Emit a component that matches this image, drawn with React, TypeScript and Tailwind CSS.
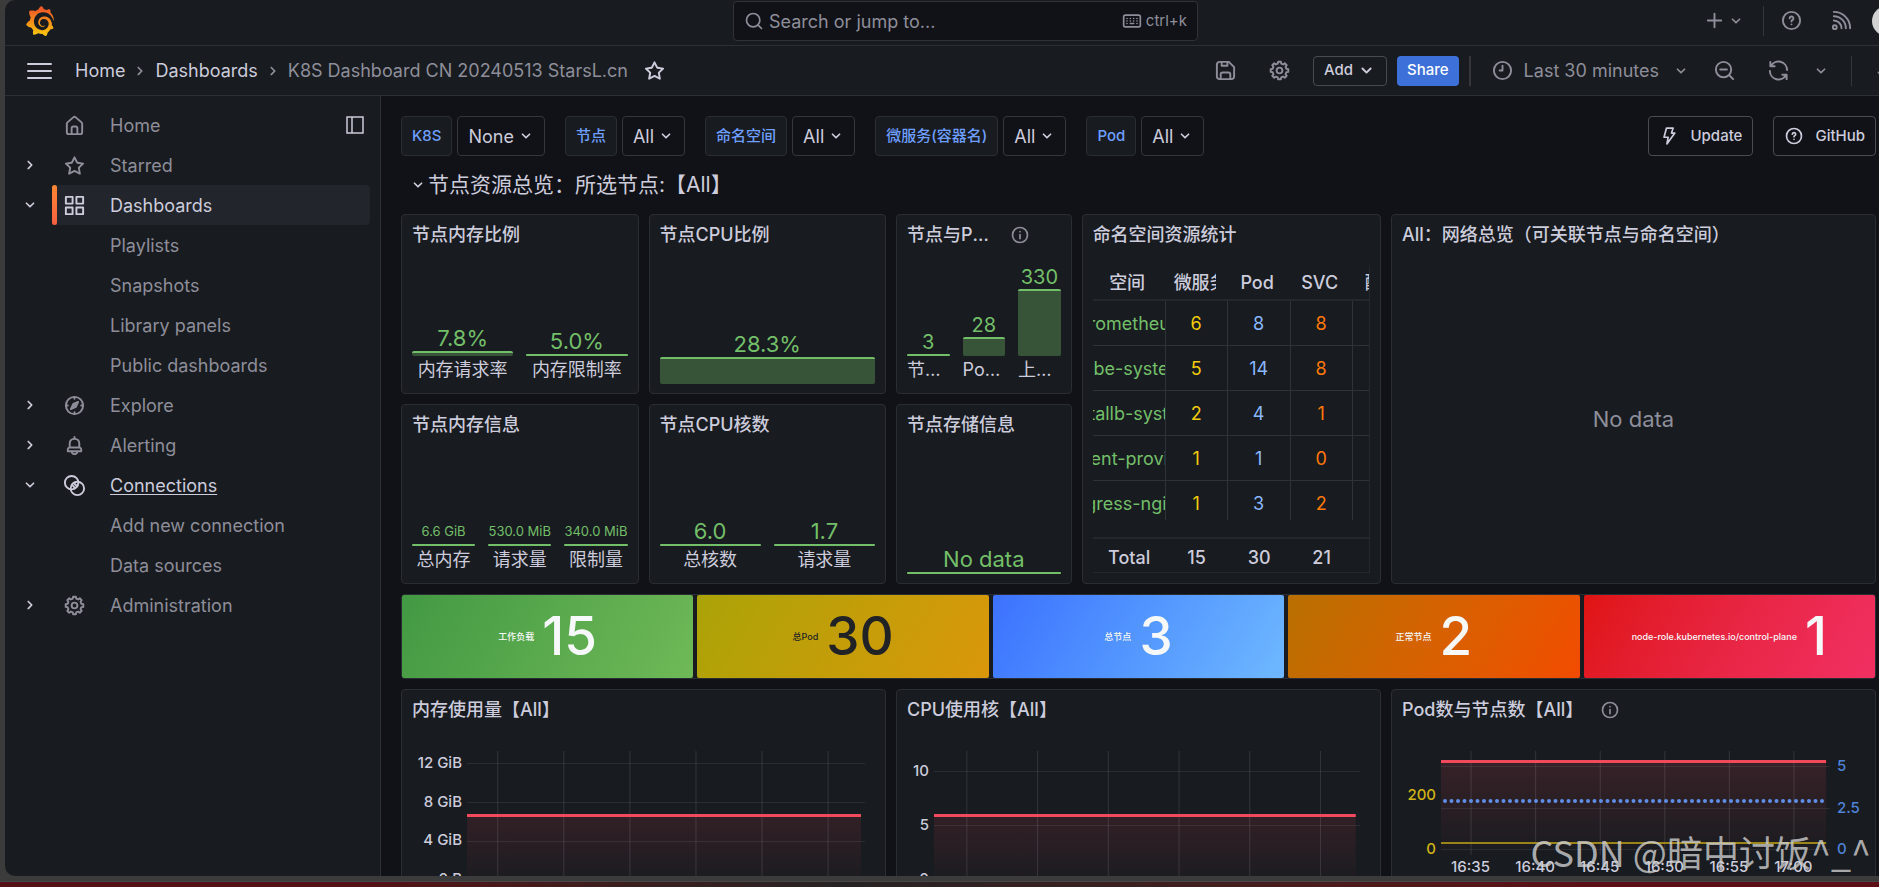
import type { ReactNode } from 'react';
import { SiGrafana } from 'react-icons/si';

// --- Icons ---
interface IconProps {
    className?: string;
}

function Glyph({ className = 'size-[23px]', children }: IconProps & { children: ReactNode }) {
    return (
        <svg viewBox="0 0 24 24" fill="currentColor" className={`shrink-0 ${className}`} aria-hidden="true">
            {children}
        </svg>
    );
}

function Stroke({ className = 'size-[23px]', children }: IconProps & { children: ReactNode }) {
    return (
        <svg
            viewBox="0 0 24 24"
            fill="none"
            stroke="currentColor"
            strokeWidth="2"
            strokeLinecap="round"
            strokeLinejoin="round"
            className={`shrink-0 ${className}`}
            aria-hidden="true"
        >
            {children}
        </svg>
    );
}

const AngleDown = ({ className = 'size-5' }: IconProps) => (
    <Glyph className={className}>
        <path d="M17,9.17a1,1,0,0,0-1.41,0L12,12.71,8.46,9.17a1,1,0,0,0-1.41,0,1,1,0,0,0,0,1.42l4.24,4.24a1,1,0,0,0,1.42,0L17,10.59A1,1,0,0,0,17,9.17Z" />
    </Glyph>
);

const AngleRight = ({ className = 'size-5' }: IconProps) => (
    <Glyph className={className}>
        <path d="M14.83,11.29,10.59,7.05a1,1,0,0,0-1.42,0,1,1,0,0,0,0,1.41L12.71,12,9.17,15.54a1,1,0,0,0,0,1.41,1,1,0,0,0,.71.29,1,1,0,0,0,.71-.29l4.24-4.24A1,1,0,0,0,14.83,11.29Z" />
    </Glyph>
);

const HomeIcon = () => (
    <Glyph>
        <path d="M20,8h0L14,2.74a3,3,0,0,0-4,0L4,8a3,3,0,0,0-1,2.26V19a3,3,0,0,0,3,3H18a3,3,0,0,0,3-3V10.25A3,3,0,0,0,20,8ZM14,20H10V15a1,1,0,0,1,1-1h2a1,1,0,0,1,1,1Zm5-1a1,1,0,0,1-1,1H16V15a3,3,0,0,0-3-3H11a3,3,0,0,0-3,3v5H6a1,1,0,0,1-1-1V10.25a1,1,0,0,1,.34-.75l6-5.25a1,1,0,0,1,1.32,0l6,5.25a1,1,0,0,1,.34.75Z" />
    </Glyph>
);

const StarIcon = () => (
    <Glyph>
        <path d="M22,9.67A1,1,0,0,0,21.14,9l-5.69-.83L12.9,3a1,1,0,0,0-1.8,0L8.55,8.16,2.86,9a1,1,0,0,0-.81.68,1,1,0,0,0,.25,1l4.13,4-1,5.68A1,1,0,0,0,6.9,21.44L12,18.77l5.1,2.67a.93.93,0,0,0,.46.12,1,1,0,0,0,.59-.19,1,1,0,0,0,.4-1l-1-5.68,4.13-4A1,1,0,0,0,22,9.67Zm-6.15,4a1,1,0,0,0-.29.88l.72,4.2-3.76-2a1.06,1.06,0,0,0-.94,0l-3.76,2,.72-4.2a1,1,0,0,0-.29-.88l-3-3,4.21-.61a1,1,0,0,0,.76-.55L12,5.7l1.88,3.82a1,1,0,0,0,.76.55l4.21.61Z" />
    </Glyph>
);

const AppsIcon = () => (
    <Glyph>
        <path d="M10,13H3a1,1,0,0,0-1,1v7a1,1,0,0,0,1,1h7a1,1,0,0,0,1-1V14A1,1,0,0,0,10,13ZM9,20H4V15H9ZM21,2H14a1,1,0,0,0-1,1v7a1,1,0,0,0,1,1h7a1,1,0,0,0,1-1V3A1,1,0,0,0,21,2ZM20,9H15V4h5Zm1,4H14a1,1,0,0,0-1,1v7a1,1,0,0,0,1,1h7a1,1,0,0,0,1-1V14A1,1,0,0,0,21,13Zm-1,7H15V15h5ZM10,2H3A1,1,0,0,0,2,3v7a1,1,0,0,0,1,1h7a1,1,0,0,0,1-1V3A1,1,0,0,0,10,2ZM9,9H4V4H9Z" />
    </Glyph>
);

const BellIcon = () => (
    <Glyph>
        <path d="M18,13.18V10a6,6,0,0,0-5-5.91V3a1,1,0,0,0-2,0V4.09A6,6,0,0,0,6,10v3.18A3,3,0,0,0,4,16v2a1,1,0,0,0,1,1H8.14a4,4,0,0,0,7.72,0H19a1,1,0,0,0,1-1V16A3,3,0,0,0,18,13.18ZM8,10a4,4,0,0,1,8,0v3H8Zm4,10a2,2,0,0,1-1.72-1h3.44A2,2,0,0,1,12,20Zm6-3H6V16a1,1,0,0,1,1-1H17a1,1,0,0,1,1,1Z" />
    </Glyph>
);

const CompassIcon = () => (
    <Stroke>
        <circle cx="12" cy="12" r="9" />
        <path d="M12 3v2M12 19v2M3 12h2M19 12h2" />
        <path d="M15.8 8.2l-5 2.1-2.6 5.5 5.2-2.4z" />
        <path d="M11.2 12.8l1.6-1.6" />
    </Stroke>
);

const ConnectionsIcon = () => (
    <Stroke>
        <circle cx="9" cy="9" r="7" />
        <circle cx="15" cy="15" r="7" />
        <path d="M11.2 9.4l3.4 3.4M9.4 11.4l3.2 3.2" />
    </Stroke>
);

// Eight-toothed gear outline, two points per tooth flank
const gearPoints = Array.from({ length: 32 }, (_, i) => {
    const tooth = Math.floor(i / 4);
    const radius = i % 4 === 1 || i % 4 === 2 ? 9.3 : 7.4;
    const offset = [-14, -9, 9, 14][i % 4];
    const angle = ((tooth * 45 + offset) * Math.PI) / 180;
    return `${(12 + radius * Math.cos(angle)).toFixed(2)},${(12 + radius * Math.sin(angle)).toFixed(2)}`;
}).join(' ');

const CogIcon = () => (
    <Stroke>
        <polygon points={gearPoints} />
        <circle cx="12" cy="12" r="3" />
    </Stroke>
);

const DockIcon = () => (
    <svg viewBox="0 0 20 20" fill="none" stroke="currentColor" strokeWidth="1.5" className="size-5" aria-hidden="true">
        <path d="M2 2h16v16H2zM7 2v16" />
    </svg>
);

const HelpIcon = ({ className }: IconProps) => (
    <Stroke className={className}>
        <circle cx="12" cy="12" r="9" />
        <path d="M10 9.8a2 2 0 1 1 2.8 1.9c-.6.3-.8.7-.8 1.3M12 16h.01" />
    </Stroke>
);

const InfoIcon = () => (
    <Stroke className="size-5">
        <circle cx="12" cy="12" r="9" />
        <path d="M12 11.5v5M12 8h.01" />
    </Stroke>
);

const SearchIcon = () => (
    <Stroke className="size-5">
        <circle cx="11" cy="11" r="8" />
        <path d="M21 21l-4-4" />
    </Stroke>
);

const KeyboardIcon = () => (
    <Stroke className="size-5">
        <rect x="2" y="5" width="20" height="14" rx="2" />
        <path d="M6 9h.01M10 9h.01M14 9h.01M18 9h.01M6 12h.01M10 12h.01M14 12h.01M18 12h.01M6 15h.01M10 15h4M18 15h.01" />
    </Stroke>
);

const PlusIcon = () => (
    <Stroke>
        <path d="M12 5v14M5 12h14" />
    </Stroke>
);

const RssIcon = () => (
    <Stroke>
        <circle cx="5" cy="19" r="2" />
        <path d="M4 12a8 8 0 0 1 8 8M4 7.500a12.500 12.500 0 0 1 12.500 12.500M4 3a17 17 0 0 1 17 17" />
    </Stroke>
);

const SaveIcon = () => (
    <Stroke>
        <path d="M3 6a3 3 0 0 1 3-3h9.500L21 8.500V18a3 3 0 0 1-3 3H6a3 3 0 0 1-3-3z" />
        <path d="M8 3v4h6V3M7 21v-5a2 2 0 0 1 2-2h6a2 2 0 0 1 2 2v5" />
    </Stroke>
);

const ClockIcon = () => (
    <Stroke>
        <circle cx="12" cy="12" r="9" />
        <path d="M12 7v5H9" />
    </Stroke>
);

const ZoomOutIcon = () => (
    <Stroke>
        <circle cx="11" cy="11" r="8" />
        <path d="M21 21l-4-4M7.500 11h7" />
    </Stroke>
);

const SyncIcon = () => (
    <Stroke>
        <path d="M3.500 3v4.500H8M4 7.500A9 9 0 0 1 21 11.500M20.500 21v-4.500H16M20 16.500A9 9 0 0 1 3 12.500" />
    </Stroke>
);

const BoltIcon = () => (
    <Stroke className="size-5">
        <path d="M9 2.500h8l-2 6h4L9.500 21.500l1.500-8H6z" />
    </Stroke>
);

// --- Header ---
function TopBar() {
    return (
        <div className="-mr-[47px] grid h-[46px] shrink-0 grid-cols-[1fr_465px_1fr] border-b border-[#2c2f35] pr-6">
            <div className="flex items-center pb-1 pl-5">
                <svg className="absolute size-0" aria-hidden="true">
                    <linearGradient id="grafana" x1="0" y1="0" x2="0" y2="1">
                        <stop offset="0.1" stopColor="#f05a28" />
                        <stop offset="1" stopColor="#fbca0a" />
                    </linearGradient>
                </svg>
                <a href="#home" aria-label="Grafana">
                    <SiGrafana className="size-[30px] fill-[url(#grafana)]" />
                </a>
            </div>
            <div className="-mr-3 ml-3 mt-px flex h-10 w-[465px] items-center rounded-sm border border-[#303238] bg-[#111217] px-2.5">
                <SearchIcon />
                <input
                    type="text"
                    aria-label="Search"
                    placeholder="Search or jump to..."
                    className="ml-[5px] min-w-0 flex-1 bg-transparent text-[18px] placeholder:text-[#8e8e9a]"
                />
                <KeyboardIcon />
                <span className="ml-1 text-[15px]">ctrl+k</span>
            </div>
            <div className="flex items-center justify-end pb-1">
                <button type="button" aria-label="New" className="mr-[17px] flex items-center">
                    <PlusIcon />
                    <AngleDown />
                </button>
                <div className="h-[30px] w-px bg-[#34363c]" />
                <button type="button" aria-label="Help" className="flex w-[50px] justify-center pl-1">
                    <HelpIcon />
                </button>
                <button type="button" aria-label="News" className="flex w-[50px] justify-center pl-1">
                    <RssIcon />
                </button>
                <button type="button" aria-label="Profile" className="ml-2 size-[30px] rounded-full bg-[#d2d2d2]" />
            </div>
        </div>
    );
}

function Toolbar() {
    return (
        <div className="-mr-[47px] flex h-[50px] shrink-0 items-center border-b border-[#2c2f35] pl-[22px] pr-[34px]">
            <button type="button" aria-label="Toggle menu" className="flex w-[25px] flex-col gap-[5px] text-[#ccccdc]">
                <span className="h-0.5 w-full rounded bg-current" />
                <span className="h-0.5 w-full rounded bg-current" />
                <span className="h-0.5 w-full rounded bg-current" />
            </button>
            <nav aria-label="Breadcrumbs" className="ml-[23px] flex items-center gap-[5px] text-[18px]">
                <a href="#home" className="text-[#ccccdc]">Home</a>
                <AngleRight />
                <a href="#dashboards" className="text-[#ccccdc]">Dashboards</a>
                <AngleRight />
                <span>K8S Dashboard CN 20240513 StarsL.cn</span>
            </nav>
            <button type="button" aria-label="Mark as favorite" className="ml-[15px] text-[#ccccdc]">
                <StarIcon />
            </button>
            <div className="ml-auto flex items-center">
                <button type="button" aria-label="Save dashboard" className="mr-[31px]"><SaveIcon /></button>
                <button type="button" aria-label="Dashboard settings" className="mr-[22px]"><CogIcon /></button>
                <button type="button" className="mr-2.5 flex h-[30px] items-center rounded-sm border border-[#494b53] pl-2.5 pr-2 text-[15px] font-medium text-[#ccccdc]">
                    Add
                    <AngleDown className="ml-0.5 size-[23px]" />
                </button>
                <button type="button" className="mr-2.5 h-[30px] rounded-sm bg-[#3d71d9] px-2.5 text-[15px] font-medium text-white">
                    Share
                </button>
                <div className="mr-5 h-[30px] w-0.5 bg-[#34363c]" />
                <button type="button" className="mr-[22px] flex items-center text-[18px]">
                    <ClockIcon />
                    <span className="ml-2.5 mr-3">Last 30 minutes</span>
                    <AngleDown />
                </button>
                <button type="button" aria-label="Zoom out" className="mr-[31px]"><ZoomOutIcon /></button>
                <button type="button" aria-label="Refresh" className="mr-[21px]"><SyncIcon /></button>
                <button type="button" aria-label="Auto refresh interval" className="mr-5"><AngleDown /></button>
                <div className="mr-5 h-[30px] w-px bg-[#34363c]" />
                <button type="button" aria-label="Hide toolbar" className="rotate-180"><AngleDown /></button>
            </div>
        </div>
    );
}

// --- Sidebar ---
interface NavItem {
    label: string;
    icon?: ReactNode;
    toggle?: 'open' | 'closed';
    active?: boolean;
    hovered?: boolean;
    dock?: boolean;
}

const NAV_ITEMS: NavItem[] = [
    { label: 'Home', icon: <HomeIcon />, dock: true },
    { label: 'Starred', icon: <StarIcon />, toggle: 'closed' },
    { label: 'Dashboards', icon: <AppsIcon />, toggle: 'open', active: true },
    { label: 'Playlists' },
    { label: 'Snapshots' },
    { label: 'Library panels' },
    { label: 'Public dashboards' },
    { label: 'Explore', icon: <CompassIcon />, toggle: 'closed' },
    { label: 'Alerting', icon: <BellIcon />, toggle: 'closed' },
    { label: 'Connections', icon: <ConnectionsIcon />, toggle: 'open', hovered: true },
    { label: 'Add new connection' },
    { label: 'Data sources' },
    { label: 'Administration', icon: <CogIcon />, toggle: 'closed' },
];

function Sidebar() {
    return (
        <nav aria-label="Main" className="w-[376px] shrink-0 border-r border-[#2c2f35] pr-2.5 pt-[9px]">
            <ul>
                {NAV_ITEMS.map(item => (
                    <li key={item.label} className="flex h-10 items-center">
                        <div className="flex w-[47px] pl-[15px] text-[#ccccdc]">
                            {item.toggle && (
                                <button type="button" aria-label={`Toggle ${item.label}`}>
                                    {item.toggle === 'open' ? <AngleDown /> : <AngleRight />}
                                </button>
                            )}
                        </div>
                        <div className={`flex h-full flex-1 items-center rounded-sm ${item.active ? 'bg-[#22252b]' : ''}`}>
                            <span className={`h-full w-[5px] rounded-sm ${item.active ? 'bg-linear-to-b from-[#ff8833] to-[#f55f3e]' : ''}`} />
                            <a
                                href={`#${item.label.toLowerCase().replaceAll(' ', '-')}`}
                                className={`flex flex-1 items-center text-[18px] ${item.active || item.hovered ? 'text-[#ccccdc]' : ''}`}
                            >
                                <span className="flex w-[53px] pl-1.5">{item.icon}</span>
                                <span className={item.hovered ? 'underline underline-offset-2' : ''}>{item.label}</span>
                            </a>
                            {item.dock && (
                                <button type="button" aria-label="Undock menu" className="mr-[5px] text-[#ccccdc]">
                                    <DockIcon />
                                </button>
                            )}
                        </div>
                    </li>
                ))}
            </ul>
        </nav>
    );
}

// --- Dashboard controls ---
const VARIABLES = [
    { name: 'K8S', value: 'None' },
    { name: '节点', value: 'All' },
    { name: '命名空间', value: 'All' },
    { name: '微服务(容器名)', value: 'All' },
    { name: 'Pod', value: 'All' },
];

function Controls() {
    return (
        <div className="flex gap-5">
            {VARIABLES.map(v => (
                <div key={v.name} className="flex gap-[5px]">
                    <span className="flex h-10 items-center rounded-sm border border-[#2a2d32] bg-[#181b1f] px-2.5 text-[15px] font-medium text-[#6e9fff]">
                        {v.name}
                    </span>
                    <button type="button" aria-label={v.name} className="flex h-10 items-center rounded-sm border border-[#34363c] pl-2.5 pr-2 text-[18px] text-[#ccccdc]">
                        {v.value}
                        <AngleDown className="ml-0.5 size-5" />
                    </button>
                </div>
            ))}
            <div className="ml-auto flex gap-5 text-[15px] font-medium text-[#ccccdc]">
                <a href="#update" className="flex h-10 items-center gap-[11px] rounded-sm border border-[#494b53] px-2.5">
                    <BoltIcon />
                    Update
                </a>
                <a href="#github" className="flex h-10 items-center gap-[11px] rounded-sm border border-[#494b53] px-2.5">
                    <HelpIcon className="size-5" />
                    GitHub
                </a>
            </div>
        </div>
    );
}

// --- Panels ---
interface PanelProps {
    title: string;
    info?: boolean;
    className: string;
    children: ReactNode;
}

function Panel({ title, info, className, children }: PanelProps) {
    return (
        <section className={`flex min-w-0 flex-col rounded-sm border border-[#2a2d32] bg-[#181b1f] ${className}`}>
            <header className="flex h-10 shrink-0 items-center px-2.5">
                <h2 className={`truncate text-[18px] leading-6 font-medium ${info ? 'max-w-[calc(100%-68px)]' : ''}`}>{title}</h2>
                {info && <span className="ml-[17px] text-[#8e8e9a]"><InfoIcon /></span>}
            </header>
            {children}
        </section>
    );
}

interface Bar {
    value: string;
    label?: string;
    // Bar height in px, top edge included
    height: number;
}

function BarGauge({ bars, size = 'text-[22px]', align = 'text-center' }: { bars: Bar[]; size?: string; align?: string }) {
    return (
        <div className="flex flex-1 items-end gap-[13px] px-2.5 pb-[9px]">
            {bars.map(bar => (
                <div key={bar.value} className="min-w-0 flex-1">
                    <div className={`flex h-[22px] items-end justify-center leading-none whitespace-nowrap text-[#73bf69] ${size}`}>{bar.value}</div>
                    <div
                        className="mt-0.5 rounded-xs border-t-2 border-[#73bf69] bg-[#73bf69]/35"
                        style={{ height: bar.height }}
                    />
                    {bar.label && <div className={`truncate text-[18px] leading-7 ${align}`}>{bar.label}</div>}
                </div>
            ))}
        </div>
    );
}

const NAMESPACES = [
    ['prometheus', 6, 8, 8],
    ['kube-system', 5, 14, 8],
    ['metallb-system', 2, 4, 1],
    ['nfs-client-provisioner', 1, 1, 0],
    ['ingress-nginx', 1, 3, 2],
];

const ROW = 'grid grid-cols-[73px_62px_63px_62px_62px]';
const CELL = 'flex items-center justify-center overflow-hidden border-r border-b border-[#2f3237] whitespace-nowrap';

function NamespaceTable() {
    return (
        <div className="mx-2.5 mt-2.5 mb-2.5 flex-1 overflow-hidden border-r border-b border-[#24272c]">
            <table className="block text-[18px]">
                <thead className="block">
                    <tr className={`${ROW} h-9 border-b-2 border-[#24272c]`}>
                        <th className="flex items-center justify-center pr-1 font-medium">空间</th>
                        <th className="flex items-center pl-2 pr-3 font-medium"><span className="overflow-hidden whitespace-nowrap">微服务</span></th>
                        <th className="flex items-center justify-center pr-1 font-medium">Pod</th>
                        <th className="flex items-center justify-center pr-1 font-medium">SVC</th>
                        <th className="flex items-center pl-3 font-medium">配置</th>
                    </tr>
                </thead>
                <tbody className="block h-[219px] overflow-hidden">
                    {NAMESPACES.map(([name, services, pods, svc]) => (
                        <tr key={name} className={`${ROW} h-[45px]`}>
                            <td className={`${CELL} text-[#73bf69]`}>{name}</td>
                            <td className={`${CELL} text-[#f2cc0c]`}>{services}</td>
                            <td className={`${CELL} text-[#8ab8ff]`}>{pods}</td>
                            <td className={`${CELL} text-[#ff780a]`}>{svc}</td>
                            <td className={CELL} />
                        </tr>
                    ))}
                </tbody>
                <tfoot className="mt-[17px] block border-t-2 border-[#24272c] font-medium">
                    <tr className={`${ROW} h-9`}>
                        <td className="flex items-center justify-center">Total</td>
                        <td className="flex items-center justify-center">15</td>
                        <td className="flex items-center justify-center">30</td>
                        <td className="flex items-center justify-center">21</td>
                    </tr>
                </tfoot>
            </table>
        </div>
    );
}

const STATS = [
    { label: '工作负载', value: 15, color: 'from-[#429943] to-[#6fb957] text-[#f7f8fa]' },
    { label: '总Pod', value: 30, color: 'from-[#aaa307] to-[#da970b] text-[#202226]' },
    { label: '总节点', value: 3, color: 'from-[#3d71ff] to-[#6fb8ff] text-[#f7f8fa]' },
    { label: '正常节点', value: 2, color: 'from-[#b97000] to-[#f24b00] text-[#f7f8fa]' },
    { label: 'node-role.kubernetes.io/control-plane', value: 1, color: 'from-[#df1410] to-[#f13063] text-[#f7f8fa]' },
];

function StatStrip() {
    return (
        <section className="col-span-24 grid h-[85px] grid-cols-5 gap-1 rounded-sm border border-[#2a2d32] bg-[#181b1f]">
            {STATS.map(stat => (
                <div key={stat.label} className={`flex items-center justify-center gap-2 rounded-xs bg-linear-120 font-medium ${stat.color}`}>
                    <span className="text-[9px]">{stat.label}</span>
                    <span className="text-[53px] leading-none">{stat.value}</span>
                </div>
            ))}
        </section>
    );
}

// --- Time series ---
interface Tick {
    y: number;
    label: string;
}

interface ChartProps {
    id: string;
    axisWidth: string;
    lineY: number;
    fill: number;
    floor: number;
    left: Tick[];
    leftColor?: string;
    right?: Tick[];
    times?: string[];
    gridY: number[];
    children?: ReactNode;
}

const TICK_X = [7.6, 24.2, 40.8, 57.4, 74, 90.6];

function TimeSeries({ id, axisWidth, lineY, fill, floor, left, leftColor = '#ccccdc', right, times, gridY, children }: ChartProps) {
    return (
        <div className="flex h-[180px] text-[15px] font-medium">
            <svg className={`h-full shrink-0 ${axisWidth}`} fill={leftColor}>
                {left.map(t => (
                    <text key={t.label} x="100%" dx="-5" y={t.y + 5} textAnchor="end">{t.label}</text>
                ))}
            </svg>
            <svg className="h-full min-w-0 flex-1 overflow-visible">
                <linearGradient id={id} x1="0" y1="0" x2="0" y2="1">
                    <stop offset="0" stopColor="#f2495c" stopOpacity={fill} />
                    <stop offset="1" stopColor="#f2495c" stopOpacity="0.02" />
                </linearGradient>
                <rect x="0" y={lineY} width="99%" height={floor - lineY} fill={`url(#${id})`} />
                {gridY.map(y => (
                    <rect key={y} x="0" y={y} width="100%" height="1" fill="#f0faff" fillOpacity="0.08" />
                ))}
                {TICK_X.map(x => (
                    <rect key={x} x={`${x}%`} y="21" width="1" height={floor - 15} fill="#f0faff" fillOpacity="0.12" />
                ))}
                <rect x="0" y={lineY - 1} width="99%" height="3" fill="#f2495c" />
                {children}
                {times?.map((time, i) => (
                    <text key={time} x={`${TICK_X[i]}%`} y="142" textAnchor="middle" fill="#ccccdc">{time}</text>
                ))}
            </svg>
            {right ? (
                <svg className="h-full w-[45px] shrink-0" fill="#4f82d9">
                    {right.map(t => (
                        <text key={t.label} x="7" y={t.y + 5}>{t.label}</text>
                    ))}
                </svg>
            ) : (
                <div className="w-5 shrink-0" />
            )}
        </div>
    );
}

export default function App() {
    return (
        <div className="flex h-screen flex-col overflow-hidden bg-[#3b3b3b] font-[Inter,'Noto_Sans_CJK_SC',sans-serif] text-[#8e8e9a]">
            <div className="relative ml-[5px] flex min-h-0 flex-1 flex-col overflow-hidden rounded-l-[10px] bg-[#181b1f]">
                <TopBar />
                <Toolbar />
                <div className="flex min-h-0 flex-1">
                    <Sidebar />
                    <main className="min-w-0 flex-1 overflow-hidden bg-[#111217] pt-5 pr-[3px] pl-5 text-[#ccccdc]">
                        <Controls />
                        <button type="button" className="flex h-[58px] items-center pl-[7px] text-[21px]">
                            <AngleDown />
                            <span>节点资源总览：所选节点:【All】</span>
                        </button>
                        <div className="grid grid-cols-24 grid-rows-[180px_180px_85px_auto] gap-2.5">
                            <Panel title="节点内存比例" className="col-span-4">
                                <BarGauge
                                    bars={[
                                        { value: '7.8%', label: '内存请求率', height: 5 },
                                        { value: '5.0%', label: '内存限制率', height: 2 },
                                    ]}
                                />
                            </Panel>
                            <Panel title="节点CPU比例" className="col-span-4">
                                <BarGauge bars={[{ value: '28.3%', height: 27 }]} />
                            </Panel>
                            <Panel title="节点与Pod数" info className="col-span-3">
                                <BarGauge
                                    size="text-[20px]"
                                    align="text-left"
                                    bars={[
                                        { value: '3', label: '节点数', height: 2 },
                                        { value: '28', label: 'Pod数', height: 19 },
                                        { value: '330', label: '上限数', height: 67 },
                                    ]}
                                />
                            </Panel>
                            <Panel title="命名空间资源统计" className="col-span-5 row-span-2">
                                <NamespaceTable />
                            </Panel>
                            <Panel title="All：网络总览（可关联节点与命名空间）" className="col-span-8 row-span-2">
                                <div className="flex flex-1 items-center justify-center text-[22px] text-[#8e8e9a]">No data</div>
                            </Panel>
                            <Panel title="节点内存信息" className="col-span-4">
                                <BarGauge
                                    size="text-[13px] pb-1"
                                    bars={[
                                        { value: '6.6 GiB', label: '总内存', height: 2 },
                                        { value: '530.0 MiB', label: '请求量', height: 2 },
                                        { value: '340.0 MiB', label: '限制量', height: 2 },
                                    ]}
                                />
                            </Panel>
                            <Panel title="节点CPU核数" className="col-span-4">
                                <BarGauge
                                    bars={[
                                        { value: '6.0', label: '总核数', height: 2 },
                                        { value: '1.7', label: '请求量', height: 2 },
                                    ]}
                                />
                            </Panel>
                            <Panel title="节点存储信息" className="col-span-3">
                                <BarGauge bars={[{ value: 'No data', height: 2 }]} />
                            </Panel>

                            <StatStrip />

                            <Panel title="内存使用量【All】" className="col-span-8">
                                <TimeSeries
                                    id="memory-fill"
                                    axisWidth="w-[65px]"
                                    lineY={85}
                                    fill={0.12}
                                    floor={149}
                                    gridY={[33, 72, 111, 149]}
                                    left={[
                                        { y: 33, label: '12 GiB' },
                                        { y: 72, label: '8 GiB' },
                                        { y: 110, label: '4 GiB' },
                                        { y: 149, label: '0 B' },
                                    ]}
                                />
                            </Panel>
                            <Panel title="CPU使用核【All】" className="col-span-8">
                                <TimeSeries
                                    id="cpu-fill"
                                    axisWidth="w-[37px]"
                                    lineY={85}
                                    fill={0.12}
                                    floor={149}
                                    gridY={[41, 95, 149]}
                                    left={[
                                        { y: 41, label: '10' },
                                        { y: 95, label: '5' },
                                        { y: 149, label: '0' },
                                    ]}
                                />
                            </Panel>
                            <Panel title="Pod数与节点数【All】" info className="col-span-8">
                                <TimeSeries
                                    id="pod-fill"
                                    axisWidth="w-[49px]"
                                    lineY={31}
                                    fill={0.14}
                                    floor={119}
                                    gridY={[36, 78, 119]}
                                    leftColor="#d3b416"
                                    left={[
                                        { y: 65, label: '200' },
                                        { y: 119, label: '0' },
                                    ]}
                                    right={[
                                        { y: 36, label: '5' },
                                        { y: 78, label: '2.5' },
                                        { y: 119, label: '0' },
                                    ]}
                                    times={['16:35', '16:40', '16:45', '16:50', '16:55', '17:00']}
                                >
                                    <line x1="4" y1="71" x2="99.500%" y2="71" stroke="#5f8ee8" strokeWidth="4" strokeLinecap="round" strokeDasharray="0 6.500" />
                                    <rect x="0" y="112" width="99%" height="2" fill="#9c8518" />
                                </TimeSeries>
                            </Panel>
                        </div>
                    </main>
                </div>
                <div className="pointer-events-none absolute right-2 -bottom-0.5 font-['Noto_Sans_CJK_SC',sans-serif] text-[36px] whitespace-nowrap text-[#d0d0d0]/80">
                    CSDN @暗中讨饭^_^
                </div>
            </div>
            <div className="mt-[5px] h-1.5 shrink-0 border-t border-[#484848] bg-linear-to-r from-[#521217] from-20% via-[#262324] via-45% to-[#5c0f17] to-85%" />
        </div>
    );
}
